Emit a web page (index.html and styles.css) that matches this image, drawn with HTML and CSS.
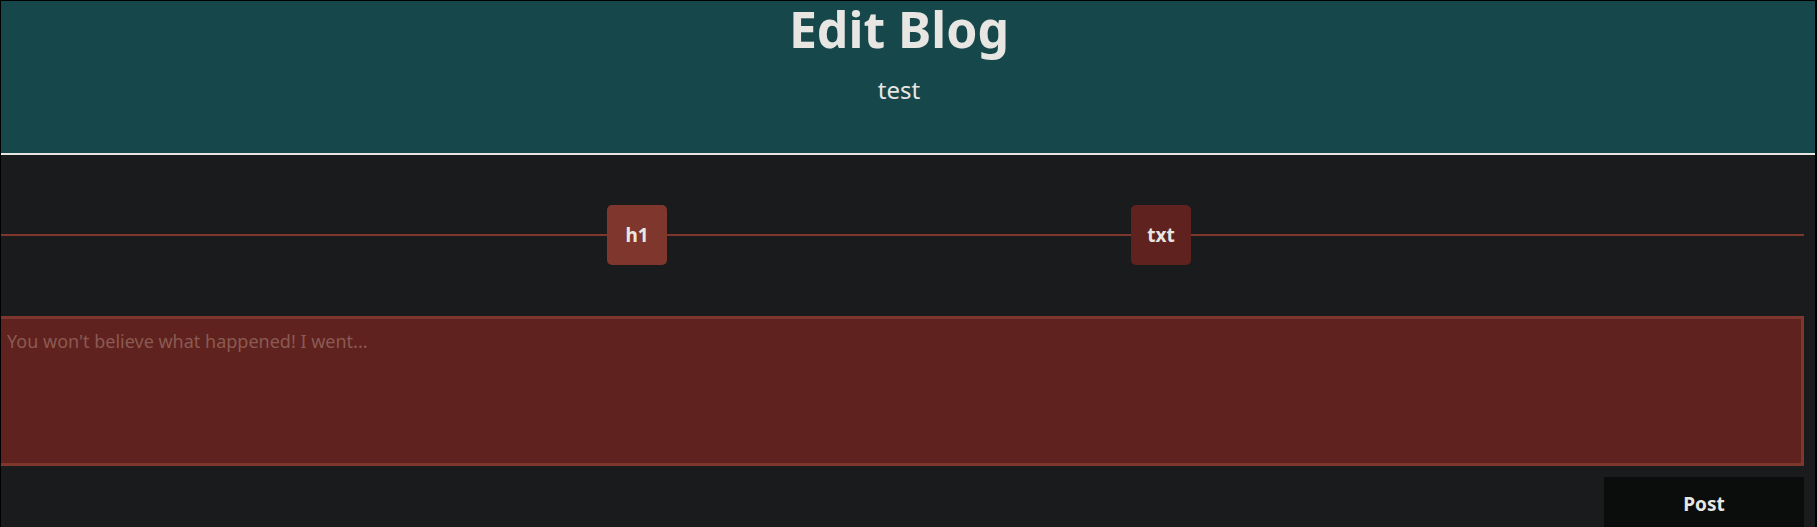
FILE: index.html
```html
<!DOCTYPE html>
<html lang="en">
<head>
<meta charset="utf-8">
<title>Edit Blog</title>
<link rel="stylesheet" href="styles.css">
</head>
<body>
<div class="page">
  <header class="site-header">
    <h1 class="title">Edit Blog</h1>
    <p class="subtitle">test</p>
  </header>
  <main class="editor">
    <div class="blocks">
      <button class="block block-active" type="button">h1</button>
      <button class="block" type="button">txt</button>
    </div>
    <textarea class="content" placeholder="You won't believe what happened! I went..."></textarea>
    <div class="actions">
      <button class="post" type="button">Post</button>
    </div>
  </main>
</div>
</body>
</html>
```

FILE: styles.css
```css
html, body {
  margin: 0;
  padding: 0;
  background: #000;
}

body {
  font-family: "Noto Sans", "Open Sans", sans-serif;
  color: #e8e6e3;
}

.page {
  margin: 1px 2px 0 1px;
  background: #1a1b1d;
  min-height: 600px;
}

.site-header {
  background: #16474a;
  height: 152px;
  border-bottom: 2px solid #e8e6e3;
  padding-right: 18px;
  text-align: center;
  box-sizing: content-box;
}

.title {
  margin: 0;
  font-size: 50px;
  font-weight: 700;
  line-height: 57px;
  color: #e8e6e3;
}

.subtitle {
  margin: 17px 0 0;
  font-size: 24px;
  line-height: 30px;
  color: #e8e6e3;
}

.editor {
  padding-right: 11px;
}

.blocks {
  display: flex;
  justify-content: center;
  gap: 464px;
  padding: 50px 7px 0 0;
  height: 60px;
  background: linear-gradient(#7f362c, #7f362c) no-repeat 0 79px / 100% 2px;
  background-origin: border-box;
}

.block {
  width: 60px;
  height: 60px;
  border: none;
  border-radius: 5px;
  background: #5f221e;
  color: #e8e6e3;
  font-family: "Noto Sans", "Open Sans", sans-serif;
  font-weight: 700;
  font-size: 19px;
  padding: 0;
}

.block-active {
  background: #7f362c;
}

.content {
  display: block;
  width: 100%;
  box-sizing: border-box;
  height: 150px;
  margin: 51px 0 0;
  padding: 10px 6px;
  border: 3px solid #7f362c;
  border-left-width: 0;
  background: #5f221e;
  color: #e8e6e3;
  font-family: "Noto Sans", "Open Sans", sans-serif;
  font-size: 18px;
  resize: none;
  outline: none;
}

.content::placeholder {
  color: #8b5a52;
  opacity: 1;
}

.actions {
  display: flex;
  justify-content: flex-end;
  margin-top: 11px;
}

.post {
  width: 200px;
  height: 54px;
  border: none;
  background: #0b0d0d;
  color: #e8e6e3;
  font-family: "Noto Sans", "Open Sans", sans-serif;
  font-weight: 700;
  font-size: 19px;
  line-height: 54px;
  padding: 0;
}
```
